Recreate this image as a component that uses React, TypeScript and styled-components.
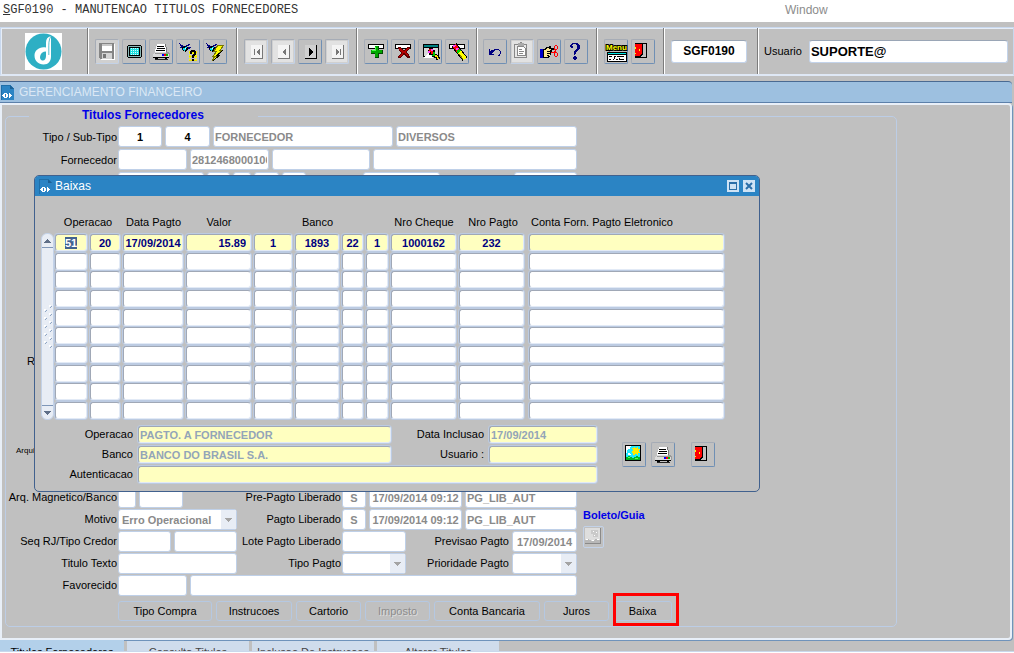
import React, { useEffect, useRef } from "react";
import styled, { createGlobalStyle, css } from "styled-components";

const GlobalStyle = createGlobalStyle`
  *, *::before, *::after { box-sizing: border-box; }
  body {
    margin: 0;
    background: #c0c0c0;
    color: #000;
    font: 11px/14px "Liberation Sans", Arial, sans-serif;
  }
  input, select, button { font: inherit; color: inherit; margin: 0; }
  #root { min-height: 100vh; }
`;

/* ---------- page frame ---------- */

const Page = styled.div`
  position: relative;
  display: flex;
  flex-direction: column;
  min-height: 100vh;
  overflow: hidden;
`;

const MenuBar = styled.nav`
  display: grid;
  grid-template-columns: 785fr 229fr;
  height: 22px;
  background: #fff;
  line-height: 21px;
`;

const MenuProgram = styled.span`
  padding-left: 3px;
  font-family: "Liberation Mono", monospace;
  font-size: 12px;
  color: #333;
  white-space: pre;
`;

const MenuWindow = styled.span`
  font-size: 12px;
  color: #8c8c8c;
`;

const ToolArea = styled.div`
  padding: 5px 0 5px;
`;

const Toolbar = styled.header`
  display: flex;
  height: 49px;
  border: 1px solid #c8d8ee;
  border-bottom: 2px solid #dfe8f5;
  box-shadow: inset 0 1px 0 #e6edf7, inset 1px 0 0 #e6edf7;
`;

const ToolGroup = styled.div<{ $width?: number; $indent?: number }>`
  display: flex;
  align-items: center;
  gap: 3px;
  ${(p) =>
    p.$width
      ? `flex: 0 0 ${p.$width}px; padding-left: ${p.$indent ?? 6}px;`
      : "flex: 1; padding: 0 5px; gap: 7px;"}
  & + & {
    border-left: 1px solid #fff;
  }
  &:not(:last-child) {
    border-right: 1px solid #7c7c7c;
  }
`;

const ToolButton = styled.button<{ $dim?: boolean }>`
  display: block;
  width: 24px;
  height: 25px;
  padding: 0;
  border: 1px solid #a6acb6;
  border-right-color: #6f8fb4;
  border-bottom-color: #6f8fb4;
  border-radius: 2px;
  background: #c0c0c0;
  ${(p) =>
    p.$dim &&
    css`
      background: #d0d0d0;
      border-right-color: #c3d2e8;
      border-bottom-color: #c3d2e8;
    `}
  svg { display: block; margin: -1px; }
`;

const BarInput = styled.input<{ $width?: number }>`
  ${(p) => (p.$width ? `width: ${p.$width}px; text-align: center;` : "flex: 1; min-width: 0;")}
  height: 23px;
  padding: 0 1px;
  border: 1px solid #c3d3ea;
  border-top-color: #9aa6b6;
  border-radius: 3px;
  background: #fff;
  font-size: 13px;
  font-weight: bold;
  outline: none;
`;

const SmallInput = styled(BarInput)`
  font-size: 12px;
`;

const TitleBar = styled.h1`
  display: flex;
  align-items: center;
  gap: 5px;
  height: 22px;
  margin: 0 2px 0 0;
  padding-left: 1px;
  border-top: 1px solid #4a6a92;
  border-bottom: 1px solid #5c80aa;
  border-radius: 0 4px 0 0;
  background: #9dc0e0;
  color: #dbe8f5;
  font-size: 12px;
  font-weight: normal;
`;

const Panel = styled.main`
  flex: 1;
  margin-right: 2px;
  padding: 4px 0 11px 3px;
  border: 2px solid #e8eff8;
  box-shadow: 1px 1px 0 #6f93bb;
  border-radius: 0 4px 4px 0;
`;

/* ---------- form behind the window ---------- */

const FormBox = styled.fieldset`
  max-width: 892px;
  margin: 0;
  padding: 3px 0 5px;
  border: 1px solid #bccde6;
  border-radius: 5px;
  min-width: 0;
`;

const Legend = styled.legend`
  height: 14px;
  margin-left: 23px;
  padding: 0 54px 0 53px;
  color: #0000e8;
  font-size: 12px;
  line-height: 13px;
  font-weight: bold;
`;

const TopRow = styled.div<{ $before?: number }>`
  display: flex;
  gap: 3px;
  height: 23px;
  margin-top: ${(p) => p.$before ?? 0}px;
`;

const RowLabel = styled.label`
  flex: 0 0 111px;
  margin-right: -2px;
  line-height: 22px;
  text-align: right;
  white-space: nowrap;
`;

const CutLabel = styled.span<{ $indent: number; $small?: boolean }>`
  padding-left: ${(p) => p.$indent}px;
  line-height: 22px;
  ${(p) => p.$small && "font-size: 8px;"}
`;

const Spacer = styled.span<{ $width: number }>`
  flex: 0 0 ${(p) => p.$width}px;
`;

const Field = styled.input<{ $width?: number; $strong?: boolean; $center?: boolean }>`
  ${(p) => (p.$width ? `flex: 0 0 ${p.$width}px; width: ${p.$width}px;` : "flex: 1; min-width: 0;")}
  height: 21px;
  padding: 0 1px;
  border: 1px solid #bfd0e8;
  border-radius: 3px;
  background: #fff;
  color: ${(p) => (p.$strong ? "#000" : "#8a8a8a")};
  font-weight: bold;
  text-align: ${(p) => (p.$center ? "center" : "left")};
  outline: none;
`;

const LowerArea = styled.div`
  display: flex;
  margin-top: 24px;
`;

const LowerGrid = styled.div`
  display: grid;
  grid-template-columns: 111px 119px 103px 235px;
  grid-auto-rows: 22px;
  column-gap: 1px;
`;

const GridLabel = styled.label`
  line-height: 20px;
  text-align: right;
  white-space: nowrap;
`;

const Group = styled.div<{ $wide?: boolean }>`
  display: flex;
  gap: 3px;
  min-width: 0;
  ${(p) => p.$wide && "grid-column: 2 / -1;"}
`;

const InnerLabel = styled(GridLabel)`
  flex: 1;
`;

const SelectBox = styled.span<{ $width: number }>`
  position: relative;
  display: flex;
  flex: 0 0 ${(p) => p.$width}px;
  height: 21px;
  svg {
    position: absolute;
    top: 1px;
    right: 1px;
    pointer-events: none;
  }
  select {
    width: 100%;
    padding: 0 3px;
    appearance: none;
    border: 1px solid #bfd0e8;
    border-radius: 3px;
    background: #fff;
    color: #8a8a8a;
    font-weight: bold;
    opacity: 1;
  }
`;

const TicketBox = styled.div`
  display: flex;
  flex-direction: column;
  align-items: flex-start;
  padding: 21px 0 0 6px;
  color: #0000e8;
  font-weight: bold;
`;

const TicketButton = styled.button`
  width: 21px;
  height: 22px;
  margin-top: 4px;
  padding: 0;
  border: 1px solid #c3d2e8;
  border-radius: 2px;
  background: #c0c0c0;
  svg { display: block; }
`;

const Actions = styled.div`
  display: flex;
  gap: 4px;
  padding: 4px 0 0 112px;
`;

const ActionButton = styled.button<{ $width: number }>`
  width: ${(p) => p.$width}px;
  height: 20px;
  padding: 0;
  border: 1px solid #b5c8e2;
  border-radius: 3px;
  background: #c0c0c0;
  line-height: 18px;
  text-align: center;
  &:disabled {
    color: #8c8c8c;
    text-shadow: 1px 1px 0 #dedede;
  }
`;

const Marked = styled.span`
  position: relative;
  display: flex;
  &::after {
    content: "";
    position: absolute;
    inset: -8px -7px -5px 0;
    border: 3px solid #f00;
    pointer-events: none;
  }
`;

/* ---------- tabs ---------- */

const Tabs = styled.div`
  display: flex;
  gap: 3px;
  height: 11px;
  overflow: hidden;
`;

const Tab = styled.button<{ $active?: boolean }>`
  width: ${(p) => (p.$active ? 124 : 122)}px;
  height: 22px;
  padding: 0;
  border: 0;
  border-top: 1px solid ${(p) => (p.$active ? "#b3d0ea" : "#6f93bb")};
  background: ${(p) => (p.$active ? "#b3d0ea" : "#cfdcec")};
  color: ${(p) => (p.$active ? "#000" : "#444")};
  line-height: 20px;
  text-align: center;
`;

const StatusLine = styled.footer`
  height: 2px;
  border-top: 1px solid #c9d8ec;
  background: #fff;
`;

/* ---------- Baixas window ---------- */

const Dialog = styled.section`
  position: absolute;
  top: 175px;
  left: 34px;
  width: 726px;
  padding-bottom: 5px;
  border: 1px solid #41618e;
  border-radius: 5px;
  background: #c0c0c0;
  overflow: hidden;
`;

const DialogTitle = styled.header`
  display: flex;
  align-items: center;
  gap: 3px;
  height: 20px;
  padding: 0 4px;
  background: #2b84c4;
  color: #fff;
  font-size: 12px;
  h2 {
    flex: 1;
    margin: 0;
    font: inherit;
  }
`;

const DialogControl = styled.button`
  width: 12px;
  height: 12px;
  padding: 0;
  border: 0;
  background: #cfe3f5;
  & + & { margin-left: 1px; }
  svg { display: block; }
`;

const TableArea = styled.div`
  display: flex;
  align-items: flex-end;
  padding: 18px 0 0 6px;
`;

const Scroller = styled.div`
  display: flex;
  flex-direction: column;
  justify-content: space-between;
  align-items: center;
  width: 13px;
  height: 187px;
  border: 1px solid #c3d2e8;
  border-radius: 6px;
  background: #e8edf5;
`;

const ScrollButton = styled.button<{ $down?: boolean }>`
  width: 11px;
  height: 14px;
  padding: 0;
  border: 0;
  border-${(p) => (p.$down ? "top" : "bottom")}: 1px solid #7f97b8;
  background: transparent;
  svg { display: block; margin: auto; }
`;

const DataTable = styled.table`
  width: 670px;
  table-layout: fixed;
  border-collapse: collapse;
  th {
    height: 19px;
    padding: 1px 0 0;
    font-weight: normal;
    vertical-align: top;
    white-space: nowrap;
  }
  th:last-child {
    padding-left: 3px;
    text-align: left;
  }
  td {
    height: 19px;
    padding: 0 2px 0 0;
    vertical-align: top;
  }
  tbody tr:nth-child(3n + 2) td { height: 18px; }
  td:nth-child(10) { padding-right: 4px; }
  td:last-child { padding-right: 0; }
`;

const cellLook = css`
  border: 1px solid #a0a8b6;
  border-right-color: #e2eaf6;
  border-bottom-color: #e2eaf6;
  border-radius: 3px;
  box-shadow: 0 0 0 1px #bccbe2;
  outline: none;
`;

const CellInput = styled.input<{ $filled?: boolean; $right?: boolean }>`
  ${cellLook}
  display: block;
  width: calc(100% - 1px);
  height: 17px;
  margin-top: 1px;
  margin-left: 1px;
  padding: 0 ${(p) => (p.$right ? 4 : 0)}px 0 0;
  background: ${(p) => (p.$filled ? "#ffffc0" : "#fff")};
  color: #000080;
  font-weight: bold;
  text-align: ${(p) => (p.$right ? "right" : "center")};
  &::selection {
    background: #41618e;
    color: #fff;
  }
`;

const Details = styled.div`
  display: flex;
  gap: 25px;
  padding-top: 6px;
`;

const DetailGrid = styled.div`
  display: grid;
  grid-template-columns: 98px 253px 88px 108px;
  grid-auto-rows: 20px;
  column-gap: 5px;
`;

const DetailLabel = styled.label`
  line-height: 16px;
  text-align: right;
  white-space: nowrap;
`;

const DetailInput = styled.input<{ $wide?: boolean }>`
  ${cellLook}
  width: 100%;
  height: 17px;
  padding: 0 1px;
  background: #ffffc0;
  color: #93a5b8;
  font-weight: bold;
  ${(p) => p.$wide && "grid-column: 2 / -1;"}
`;

const DetailButtons = styled.div`
  display: flex;
  gap: 5px;
  padding-top: 16px;
  button:last-child { margin-left: 11px; }
`;

/* ---------- icons ---------- */

const Icon = ({ children }: { children: React.ReactNode }) => (
  <svg width="24" height="25" viewBox="0 0 24 25" shapeRendering="crispEdges" aria-hidden="true">
    {children}
  </svg>
);

const FormIcon = ({ size = 15 }: { size?: number }) => (
  <svg width={size - 2} height={size} viewBox="0 0 13 15" aria-hidden="true" shapeRendering="crispEdges">
    <path d="M0 0H9L13 4V15H0Z" fill="#2b84c4" />
    <path d="M9 0L13 4H9Z" fill="#1c6196" />
    <path d="M0 0H9L13 4V15H0Z" fill="none" stroke="#1f6ea8" strokeWidth="1" />
    <path
      d="M3 8H6V9H4V12H6V13H3V12H2V11H1V10H2V9H3ZM5 8H6V9H7V12H6V13H5ZM8 8H9V9H10V10H11V11H10V12H9V13H8Z"
      fill="#fff"
    />
  </svg>
);

const Logo = () => (
  <svg width="37" height="37" viewBox="0 0 37 37" role="img" aria-label="Logo">
    <rect width="37" height="37" fill="#fff" />
    <circle cx="18.500" cy="18.500" r="18" fill="#2eafc4" />
    <path
      d="M26 3C22.500 4 21 6 21 9.500V14.500C15 13 9.500 17 9.500 22.500C9.500 28 13.500 31.500 18.500 31.500C23.500 31.500 26 28 26 23.500Z"
      fill="#fff"
    />
    <path d="M21 18.500V23C21 26 19.500 28 17 27.500C13.500 26.500 14.500 18.500 21 18.500Z" fill="#2eafc4" />
    <path d="M26 3C23.500 7 23.800 11 23.800 17V22" fill="none" stroke="#2eafc4" strokeWidth="0.8" />
  </svg>
);

const SaveIcon = () => (
  <Icon>
    <path d="M5 5H20V21H6L4 19V5Z" fill="#fff" />
    <path d="M4 4H19V20H5L4 19Z" fill="#858585" />
    <rect x="7" y="5" width="10" height="7" fill="#fff" />
    <rect x="7" y="5" width="10" height="2" fill="#c8c8c8" />
    <rect x="7" y="14" width="10" height="6" fill="#d4d4d4" />
    <rect x="8" y="15" width="3" height="4" fill="#777" />
  </Icon>
);

const ScreenIcon = () => (
  <Icon>
    <path d="M6 6H19V7H20V18H19V19H6V18H5V7H6Z" fill="#000" />
    <rect x="6" y="7" width="13" height="11" fill="#8ab8b8" />
    <rect x="7" y="8" width="11" height="9" fill="#000" />
    <rect x="8" y="9" width="9" height="7" fill="#20dede" />
    <path d="M9 9V16M11 9V16M13 9V16M15 9V16" stroke="#d8ffff" strokeDasharray="1 1" transform="translate(.5 0)" />
  </Icon>
);

const PrinterArt = () => (
  <>
    <path d="M8 5H16V7H17V13H6V10H7V7H8Z" fill="#fff" />
    <path d="M8 7H15V8H8ZM8 9H16V10H8ZM7 11H16V12H7Z" fill="#000" />
    <path d="M16 5H17V8H18V13H17V8H16Z" fill="#777" />
    <path d="M6 13H19L21 15V18H4V15Z" fill="#dcdcdc" />
    <path d="M6 14H17V13H19L21 15V18H20V15H6Z" fill="#9a9a9a" />
    <path d="M4 18H20V19H18V20H16V19H9V20H6V19H4Z" fill="#000" />
    <rect x="6" y="20" width="13" height="1" fill="#222" />
    <rect x="13" y="15" width="2" height="2" fill="#0000ff" />
    <rect x="15" y="15" width="2" height="2" fill="#ff0000" />
    <rect x="17" y="15" width="2" height="2" fill="#00c000" />
  </>
);

const PrintIcon = () => (
  <Icon>
    <PrinterArt />
  </Icon>
);

const Torch = () => (
  <>
    <path d="M3 4L9 8L7 12Z" fill="#000080" />
    <path d="M6 8L10 7L13 9L10 13L7 12Z" fill="#000" />
    <path d="M7 9H9V8H11V9H10V11H9V12H8V11H7Z" fill="#00e0f0" />
    <path d="M10 6H12V5H14V6H13V7H11V8H10ZM12 8H15V9H14V10H12ZM4 8H6V9H4Z" fill="#000080" />
    <rect x="9" y="9" width="1" height="1" fill="#fff" />
  </>
);

const QueryIcon = () => (
  <Icon>
    <Torch />
    {[12, 14, 16, 18, 20].map((y) => (
      <path key={y} d={`M13 ${y}h2v1h-2zM16 ${y}h2v1h-2zM19 ${y}h2v1h-2z`} fill="#ffff00" />
    ))}
    <path d="M13 13H21V14H13ZM13 17H21V18H13ZM13 21H21V22H13Z" fill="#e8e000" />
    <path d="M14 12H15V11H19V12H20V16H19V17H18V19H16V16H17V15H18V13H16V15H14ZM16 20H18V22H16Z" fill="#000" />
  </Icon>
);

const ExecuteIcon = () => (
  <Icon>
    <Torch />
    <path d="M15 6H21L17 11H20L13 17H16L9 22L12 17H10L14 12H11Z" fill="#ffff00" stroke="#777700" />
    <path d="M20 11L14 16.500H16L10 22" fill="none" stroke="#000" />
  </Icon>
);

const navPaths: Record<string, string> = {
  first: "M10 10H11V16H10ZM15 10H16V16H15V15H14V14H13V12H14V11H15Z",
  prev: "M14 10H15V16H14V15H13V14H12V12H13V11H14Z",
  next: "M11 9H12V10H13V11H14V12H15V14H14V15H13V16H12V17H11Z",
  last: "M11 10H12V11H13V12H14V14H13V15H12V16H11ZM15 10H16V16H15Z",
};

const NavIcon = ({ kind, on }: { kind: string; on?: boolean }) => (
  <Icon>
    {!on && <rect x="2" y="2" width="20" height="21" fill="#e2e2e2" />}
    <rect x="7" y="6" width="12" height="14" fill={on ? "#000" : "#777"} />
    <rect x="7" y="6" width="11" height="13" fill={on ? "#d0d0d0" : "#f4f4f4"} />
    <path d={navPaths[kind]} fill={on ? "#000" : "#777"} />
  </Icon>
);

const RecordBar = () => (
  <>
    <rect x="4" y="5" width="16" height="5" fill="#000" />
    <rect x="5" y="6" width="14" height="3" fill="#fff" />
  </>
);

const InsertIcon = () => (
  <Icon>
    <RecordBar />
    <path d="M11 7H15V11H19V15H15V19H11V15H7V11H11Z" fill="#004800" />
    <path d="M11 7H14V11H18V14H14V18H11V14H7V11H11Z" fill="#00a800" />
    <path d="M11 8H12V12H8V11H11Z" fill="#40ff40" />
  </Icon>
);

const RemoveIcon = () => (
  <Icon>
    <RecordBar />
    <path
      d="M7 8H10V9H11V10H12V11H14V10H15V9H16V8H19V10H18V11H17V12H16V14H17V15H18V17H19V19H16V18H15V17H14V16H12V17H11V18H10V19H7V17H8V16H9V15H10V13H9V12H8V10H7Z"
      fill="#5c0000"
    />
    <path
      d="M8 9H10V10H11V11H12V12H14V11H15V10H16V9H18V10H17V11H16V12H15V14H16V15H17V17H16V16H15V15H14V14H12V16H11V17H10V18H8V17H9V16H10V15H11V13H10V12H9V11H8Z"
      fill="#b40000"
    />
  </Icon>
);

const ClearFormIcon = () => (
  <Icon>
    <rect x="5" y="5" width="16" height="13" fill="#000" />
    <rect x="6" y="6" width="14" height="2" fill="#008080" />
    <path d="M6 9H20V17H6Z" fill="#d8d8d8" />
    <path d="M6 18L11 13L15 19H6Z" fill="#fff" />
    <path d="M11 9H15V11H17V14H15V16H11V14H10V11H11Z" fill="#000" />
    <path d="M11 10H13V12H15V15H13V13H11Z" fill="#ff0000" />
    <path d="M10 12H12V14H10ZM13 10H15V12H13Z" fill="#ff40ff" />
    <path d="M15 13H17V17H14V16H15Z" fill="#00c000" />
    <path d="M17 15H19V16H20V18H22V20H20V21H18V19H16V17H17Z" fill="#000" />
    <path d="M17 16H19V17H20V19H21V20H19V18H17Z" fill="#ffe000" />
  </Icon>
);

const ClearRecordIcon = () => (
  <Icon>
    <RecordBar />
    <path d="M9 6L20 20" stroke="#000" strokeWidth="6" />
    <path d="M9 6L20 20" stroke="#ffff00" strokeWidth="4" />
    <path d="M9 6L14 12.500" stroke="#ff0000" strokeWidth="4" />
    <path d="M9 6L10 7.500M12 9L13 10.500" stroke="#ff40ff" strokeWidth="3" />
    <path d="M13 11L14.500 13" stroke="#00d000" strokeWidth="4" />
    <path d="M14 15L18 20" stroke="#8a8a00" />
  </Icon>
);

const UndoIcon = () => (
  <Icon>
    <path
      d="M6 10H7V12H8V11H11V10H16V11H17V12H18V15H17V17H15V16H16V15H17V12H16V11H12V12H11V13H10V14H9V15H11V16H6Z"
      fill="#000080"
    />
  </Icon>
);

const PasteIcon = () => (
  <Icon>
    <rect x="2" y="2" width="20" height="21" fill="#e2e2e2" />
    <path d="M5 6H17V19H5Z" fill="#e8e8e8" stroke="#888" transform="translate(-.5 -.5)" />
    <rect x="8" y="4" width="6" height="3" fill="#aaa" />
    <rect x="10" y="3" width="2" height="1" fill="#888" />
    <path d="M7 8H13L15 10V17H7Z" fill="#fff" stroke="#888" transform="translate(.5 -.5)" />
    <path d="M9 10H12V11H9ZM9 12H14V13H9ZM9 14H13V15H9Z" fill="#888" />
  </Icon>
);

const CutIcon = () => (
  <Icon>
    <rect x="3" y="10" width="3" height="9" fill="#0000c8" />
    <path d="M6 10H8V9H9V8H12V7H14V9H18V11H15V13H14V16H13V18H12V19H6Z" fill="#000" />
    <path d="M7 11H9V10H10V9H12V10H17V10H14V11H13V17H11V18H7Z" fill="#ffe890" />
    <path d="M10 12H14V13H10ZM10 14H13V15H10ZM10 16H12V17H10Z" fill="#000" />
    <path
      d="M14 13H17V12H18V11H17V7H18V6H20V7H21V10H20V11H19V13H20V14H21V17H20V18H18V17H17V14H14ZM18 7V10H20V7ZM18 14V17H20V14Z"
      fill="#ff0000"
      fillRule="evenodd"
    />
  </Icon>
);

const HelpIcon = () => (
  <Icon>
    <path
      d="M8 4H14V5H15V6H16V10H15V11H14V12H13V13H12V15H11V16H10V12H11V11H12V10H13V6H12V5H9V6H8V7H9V9H7V8H6V6H7V5H8ZM10 17H12V18H13V20H12V21H10V20H9V18H10Z"
      fill="#000080"
    />
  </Icon>
);

const MenuText = styled.text`
  font: bold 8px "Liberation Sans", sans-serif;
  fill: #ffff00;
  stroke: #000;
  stroke-width: 2px;
  paint-order: stroke;
`;

const MenuIcon = () => (
  <Icon>
    <MenuText x="2" y="11">Menu</MenuText>
    <rect x="3" y="13" width="20" height="10" fill="#000" />
    <rect x="4" y="14" width="18" height="1" fill="#00e8e8" />
    <rect x="4" y="16" width="18" height="6" fill="#fff" />
    <path d="M5 17H8V18H5ZM10 17H12V18H10ZM13 17H20V18H13ZM5 20H7V21H5ZM9 20H10V21H9ZM12 20H14V21H12ZM16 20H20V21H16Z" fill="#000" />
    <path d="M10 18H11V20H10ZM15 19H16V21H15Z" fill="#000" />
  </Icon>
);

const DoorIcon = () => (
  <Icon>
    <rect x="4" y="4" width="12" height="15" fill="#000" />
    <rect x="5" y="5" width="10" height="13" fill="#c0c0c0" />
    <path d="M4 4H12V16H11V17H10V18H4Z" fill="#000" />
    <path d="M4 5H11V15H10V16H9V17H4Z" fill="#ff0000" />
    <path d="M4 8H5V10H4ZM4 14H5V15H4ZM8 10H9V12H8Z" fill="#ffff00" />
  </Icon>
);

const PictureIcon = () => (
  <Icon>
    <rect x="3" y="3" width="16" height="16" fill="#000" />
    <rect x="4" y="4" width="14" height="14" fill="#20e8ff" />
    <path d="M4 4H9V5H8V7H6V8H5V11H4ZM6 11H8V12H9V13H6Z" fill="#fff" />
    <path d="M12 5H13V6H15V5H16V7H18V8H17V10H18V11H16V13H15V12H13V13H11V11H10V9H11V7H10V6H12Z" fill="#ffe800" />
    <path d="M4 15H6V14H8V15H10V16H12V15H14V14H16V15H18V18H4Z" fill="#00b428" />
    <path d="M6 15H8V16H6ZM13 16H16V17H13Z" fill="#50ff50" />
  </Icon>
);

const DimPicture = () => (
  <svg width="19" height="20" viewBox="0 0 19 20" shapeRendering="crispEdges" aria-hidden="true">
    <rect x="1" y="1" width="16" height="16" fill="#8a8a8a" />
    <rect x="1" y="1" width="15" height="15" fill="#dedede" />
    <path d="M7 3H14V10H9V7H7Z" fill="#cacaca" />
    <path d="M1 13H3V12H5V13H7V14H9V13H11V12H13V13H16V16H1Z" fill="#b8b8b8" />
    <path d="M2 12H4V13H2ZM8 13H10V14H8ZM13 12H15V13H13ZM9 4H10V5H9ZM12 5H13V6H12ZM10 8H11V9H10Z" fill="#fff" />
  </svg>
);

const DropArrow = () => (
  <svg width="15" height="19" viewBox="0 0 15 19" shapeRendering="crispEdges" aria-hidden="true">
    <rect width="15" height="19" fill="#e8edf5" />
    <path d="M4 8H11V9H10V10H9V11H8V12H7V11H6V10H5V9H4Z" fill="#a4a4a4" />
  </svg>
);

const Triangle = ({ down }: { down?: boolean }) => (
  <svg width="7" height="4" viewBox="0 0 7 4" shapeRendering="crispEdges" aria-hidden="true">
    <path
      d={down ? "M0 0H7V1H6V2H5V3H4V4H3V3H2V2H1V1H0Z" : "M3 0H4V1H5V2H6V3H7V4H0V3H1V2H2V1H3Z"}
      fill="#5f6f88"
    />
  </svg>
);

const Grip = () => (
  <svg width="9" height="44" viewBox="0 0 9 44" shapeRendering="crispEdges" aria-hidden="true">
    {[0, 8, 16, 24, 32, 40].map((y) => (
      <g key={y}>
        <path d={`M6 ${y}h2v1h-1v1h-1z`} fill="#fff" />
        <path d={`M8 ${y + 1}v1h-1v1h1v-1h1v-1z`} fill="#8fa6c4" />
        {y < 40 && (
          <>
            <path d={`M1 ${y + 4}h2v1h-1v1h-1z`} fill="#fff" />
            <path d={`M3 ${y + 5}v1h-1v1h1v-1h1v-1z`} fill="#8fa6c4" />
          </>
        )}
      </g>
    ))}
  </svg>
);

/* ---------- data ---------- */

const columns = [35, 33, 63, 68, 41, 47, 24, 25, 68, 70, 196];
const names = [
  "Operacao", "Sub-operacao", "Data Pagto", "Valor", "Tipo", "Banco", "Agencia", "Digito",
  "Nro Cheque", "Nro Pagto", "Conta Forn. Pagto Eletronico",
];
const firstRow = ["51", "20", "17/09/2014", "15.89", "1", "1893", "22", "1", "1000162", "232", ""];
const rows = [firstRow, ...Array.from({ length: 9 }, () => columns.map(() => ""))];

const Select = ({ id, width, value }: { id: string; width: number; value?: string }) => (
  <SelectBox $width={width}>
    <select id={id} disabled>
      <option>{value}</option>
    </select>
    <DropArrow />
  </SelectBox>
);

const BaixasWindow = () => {
  const first = useRef<HTMLInputElement>(null);
  useEffect(() => {
    first.current?.focus();
    first.current?.select();
  }, []);

  return (
    <Dialog role="dialog" aria-labelledby="baixas-title">
      <DialogTitle>
        <FormIcon />
        <h2 id="baixas-title">Baixas</h2>
        <DialogControl aria-label="Maximizar">
          <svg width="12" height="12" viewBox="0 0 12 12" shapeRendering="crispEdges">
            <path d="M2 2H10V10H2ZM3 4V9H9V4Z" fill="#2b6ea8" fillRule="evenodd" />
          </svg>
        </DialogControl>
        <DialogControl aria-label="Fechar">
          <svg width="12" height="12" viewBox="0 0 12 12">
            <path d="M3 3L9 9M9 3L3 9" stroke="#2b6ea8" strokeWidth="2" />
          </svg>
        </DialogControl>
      </DialogTitle>
      <TableArea>
        <Scroller>
          <ScrollButton aria-label="Subir">
            <Triangle />
          </ScrollButton>
          <Grip />
          <ScrollButton $down aria-label="Descer">
            <Triangle down />
          </ScrollButton>
        </Scroller>
        <DataTable>
          <colgroup>
            {columns.map((w, i) => (
              <col key={i} width={w} />
            ))}
          </colgroup>
          <thead>
            <tr>
              <th colSpan={2}>Operacao</th>
              <th>Data Pagto</th>
              <th>Valor</th>
              <th />
              <th>Banco</th>
              <th />
              <th />
              <th>Nro Cheque</th>
              <th>Nro Pagto</th>
              <th>Conta Forn. Pagto Eletronico</th>
            </tr>
          </thead>
          <tbody>
            {rows.map((row, r) => (
              <tr key={r}>
                {row.map((value, c) => (
                  <td key={c}>
                    <CellInput
                      ref={r === 0 && c === 0 ? first : undefined}
                      aria-label={names[c]}
                      defaultValue={value}
                      $filled={r === 0}
                      $right={c === 3}
                    />
                  </td>
                ))}
              </tr>
            ))}
          </tbody>
        </DataTable>
      </TableArea>
      <Details>
        <DetailGrid>
          <DetailLabel htmlFor="d-op">Operacao</DetailLabel>
          <DetailInput id="d-op" readOnly value="PAGTO. A FORNECEDOR" />
          <DetailLabel htmlFor="d-data">Data Inclusao</DetailLabel>
          <DetailInput id="d-data" readOnly value="17/09/2014" />
          <DetailLabel htmlFor="d-banco">Banco</DetailLabel>
          <DetailInput id="d-banco" readOnly value="BANCO DO BRASIL S.A." />
          <DetailLabel htmlFor="d-user">Usuario :</DetailLabel>
          <DetailInput id="d-user" readOnly value="" />
          <DetailLabel htmlFor="d-aut">Autenticacao</DetailLabel>
          <DetailInput id="d-aut" $wide readOnly value="" />
        </DetailGrid>
        <DetailButtons>
          <ToolButton aria-label="Imagem"><PictureIcon /></ToolButton>
          <ToolButton aria-label="Imprimir"><PrintIcon /></ToolButton>
          <ToolButton aria-label="Sair"><DoorIcon /></ToolButton>
        </DetailButtons>
      </Details>
    </Dialog>
  );
};

export default function App() {
  return (
    <>
      <GlobalStyle />
      <Page>
        <MenuBar>
          <MenuProgram><u>S</u>GF0190 - MANUTENCAO TITULOS FORNECEDORES</MenuProgram>
          <MenuWindow>Window</MenuWindow>
        </MenuBar>

        <ToolArea>
          <Toolbar>
            <ToolGroup $width={87} $indent={24}><Logo /></ToolGroup>
            <ToolGroup $width={149}>
              <ToolButton $dim aria-label="Salvar"><SaveIcon /></ToolButton>
              <ToolButton aria-label="Tela"><ScreenIcon /></ToolButton>
              <ToolButton aria-label="Imprimir"><PrintIcon /></ToolButton>
              <ToolButton aria-label="Consultar"><QueryIcon /></ToolButton>
              <ToolButton aria-label="Executar"><ExecuteIcon /></ToolButton>
            </ToolGroup>
            <ToolGroup $width={120}>
              <ToolButton $dim aria-label="Primeiro"><NavIcon kind="first" /></ToolButton>
              <ToolButton $dim aria-label="Anterior"><NavIcon kind="prev" /></ToolButton>
              <ToolButton aria-label="Proximo"><NavIcon kind="next" on /></ToolButton>
              <ToolButton $dim aria-label="Ultimo"><NavIcon kind="last" /></ToolButton>
            </ToolGroup>
            <ToolGroup $width={120}>
              <ToolButton aria-label="Inserir"><InsertIcon /></ToolButton>
              <ToolButton aria-label="Excluir"><RemoveIcon /></ToolButton>
              <ToolButton aria-label="Limpar tela"><ClearFormIcon /></ToolButton>
              <ToolButton aria-label="Limpar registro"><ClearRecordIcon /></ToolButton>
            </ToolGroup>
            <ToolGroup $width={120} $indent={5}>
              <ToolButton aria-label="Desfazer"><UndoIcon /></ToolButton>
              <ToolButton $dim aria-label="Colar"><PasteIcon /></ToolButton>
              <ToolButton aria-label="Recortar"><CutIcon /></ToolButton>
              <ToolButton aria-label="Ajuda"><HelpIcon /></ToolButton>
            </ToolGroup>
            <ToolGroup $width={67}>
              <ToolButton aria-label="Menu"><MenuIcon /></ToolButton>
              <ToolButton aria-label="Sair"><DoorIcon /></ToolButton>
            </ToolGroup>
            <ToolGroup $width={94}>
              <SmallInput $width={76} aria-label="Programa" readOnly value="SGF0190" />
            </ToolGroup>
            <ToolGroup>
              <label htmlFor="usuario">Usuario</label>
              <BarInput id="usuario" readOnly value="SUPORTE@" />
            </ToolGroup>
          </Toolbar>
        </ToolArea>

        <TitleBar>
          <FormIcon />
          GERENCIAMENTO FINANCEIRO
        </TitleBar>

        <Panel>
          <FormBox>
            <Legend>Titulos Fornecedores</Legend>
            <TopRow>
              <RowLabel htmlFor="tipo">Tipo / Sub-Tipo</RowLabel>
              <Field id="tipo" $width={44} $strong $center readOnly value="1" />
              <Field aria-label="Sub-Tipo" $width={45} $strong $center readOnly value="4" />
              <Field aria-label="Descricao do tipo" $width={180} readOnly value="FORNECEDOR" />
              <Field aria-label="Descricao do sub-tipo" $width={181} readOnly value="DIVERSOS" />
            </TopRow>
            <TopRow>
              <RowLabel htmlFor="fornecedor">Fornecedor</RowLabel>
              <Field id="fornecedor" $width={69} readOnly value="" />
              <Field aria-label="CNPJ" $width={79} readOnly value="2812468000106" />
              <Field aria-label="Fantasia" $width={98} readOnly value="" />
              <Field aria-label="Nome" $width={204} readOnly value="" />
            </TopRow>
            <TopRow>
              <RowLabel as="span" />
              <Field aria-label="Titulo" $width={86} readOnly value="" />
              <Field aria-label="Serie" $width={23} readOnly value="" />
              <Field aria-label="Parcela" $width={18} readOnly value="" />
              <Field aria-label="Sequencia" $width={25} readOnly value="" />
              <Field aria-label="Ordem" $width={24} readOnly value="" />
              <Spacer $width={51} />
              <Field aria-label="Emissao" $width={77} readOnly value="" />
              <Spacer $width={68} />
              <Field aria-label="Vencimento" $width={63} readOnly value="" />
            </TopRow>
            <TopRow $before={155}><CutLabel $indent={21}>R</CutLabel></TopRow>
            <TopRow $before={67}><CutLabel $indent={10} $small>Arqui</CutLabel></TopRow>

            <LowerArea>
              <LowerGrid>
                <GridLabel htmlFor="arq">Arq. Magnetico/Banco</GridLabel>
                <Group>
                  <Field id="arq" $width={18} readOnly value="" />
                  <Field aria-label="Banco" $width={44} readOnly value="" />
                </Group>
                <GridLabel htmlFor="pre">Pre-Pagto Liberado</GridLabel>
                <Group>
                  <Field id="pre" $width={24} $center readOnly value="S" />
                  <Field aria-label="Data do pre-pagto" $width={93} $center readOnly value="17/09/2014 09:12" />
                  <Field aria-label="Usuario do pre-pagto" readOnly value="PG_LIB_AUT" />
                </Group>

                <GridLabel htmlFor="motivo">Motivo</GridLabel>
                <Group><Select id="motivo" width={119} value="Erro Operacional" /></Group>
                <GridLabel htmlFor="pag">Pagto Liberado</GridLabel>
                <Group>
                  <Field id="pag" $width={24} $center readOnly value="S" />
                  <Field aria-label="Data do pagto" $width={93} $center readOnly value="17/09/2014 09:12" />
                  <Field aria-label="Usuario do pagto" readOnly value="PG_LIB_AUT" />
                </Group>

                <GridLabel htmlFor="seq">Seq RJ/Tipo Credor</GridLabel>
                <Group>
                  <Field id="seq" $width={53} readOnly value="" />
                  <Field aria-label="Tipo Credor" readOnly value="" />
                </Group>
                <GridLabel htmlFor="lote">Lote Pagto Liberado</GridLabel>
                <Group>
                  <Field id="lote" $width={64} readOnly value="" />
                  <InnerLabel htmlFor="prev">Previsao Pagto</InnerLabel>
                  <Field id="prev" $width={65} $center readOnly value="17/09/2014" />
                </Group>

                <GridLabel htmlFor="texto">Titulo Texto</GridLabel>
                <Group><Field id="texto" readOnly value="" /></Group>
                <GridLabel htmlFor="tpag">Tipo Pagto</GridLabel>
                <Group>
                  <Select id="tpag" width={64} />
                  <InnerLabel htmlFor="prio">Prioridade Pagto</InnerLabel>
                  <Select id="prio" width={65} />
                </Group>

                <GridLabel htmlFor="fav">Favorecido</GridLabel>
                <Group $wide>
                  <Field id="fav" $width={69} readOnly value="" />
                  <Field aria-label="Nome do favorecido" readOnly value="" />
                </Group>
              </LowerGrid>
              <TicketBox>
                <label htmlFor="boleto">Boleto/Guia</label>
                <TicketButton id="boleto"><DimPicture /></TicketButton>
              </TicketBox>
            </LowerArea>

            <Actions>
              <ActionButton $width={94}>Tipo Compra</ActionButton>
              <ActionButton $width={76}>Instrucoes</ActionButton>
              <ActionButton $width={65}>Cartorio</ActionButton>
              <ActionButton $width={65} disabled>Imposto</ActionButton>
              <ActionButton $width={106}>Conta Bancaria</ActionButton>
              <ActionButton $width={65}>Juros</ActionButton>
              <Marked><ActionButton $width={59}>Baixa</ActionButton></Marked>
            </Actions>
          </FormBox>
        </Panel>

        <Tabs>
          <Tab $active>Titulos Fornecedores</Tab>
          <Tab>Consulta Titulos</Tab>
          <Tab>Inclusao De Instrucoes</Tab>
          <Tab>Alterar Titulos</Tab>
        </Tabs>
        <StatusLine />

        <BaixasWindow />
      </Page>
    </>
  );
}
